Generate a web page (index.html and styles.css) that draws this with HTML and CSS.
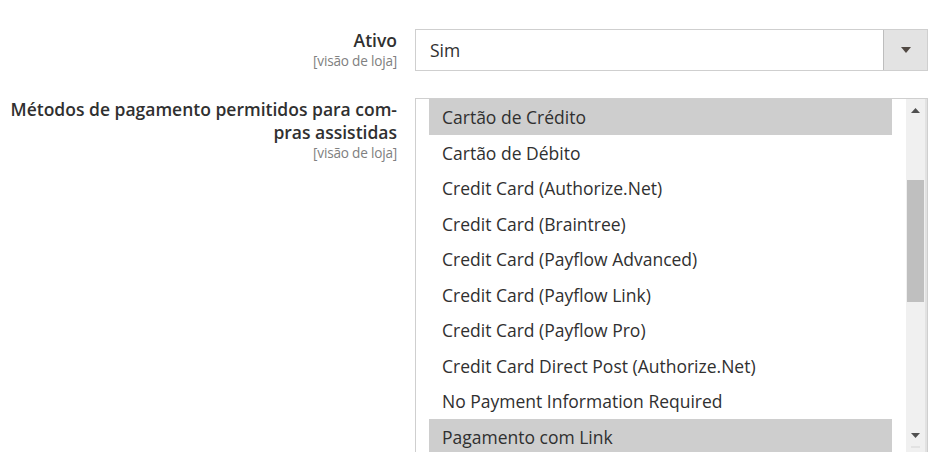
FILE: index.html
```html
<!DOCTYPE html>
<html lang="pt">
<head>
<meta charset="utf-8">
<title>Config</title>
<link rel="stylesheet" href="styles.css">
</head>
<body>
<div class="form">
  <div class="row row-first">
    <div class="label">
      <span class="label-text">Ativo</span>
      <span class="scope">[visão de loja]</span>
    </div>
    <div class="control">
      <div class="select">
        <span class="select-value">Sim</span>
        <span class="select-btn"><svg width="10" height="6" viewBox="0 0 10 6"><path d="M0 0h10L5 6z" fill="#514943"/></svg></span>
      </div>
    </div>
  </div>
  <div class="row">
    <div class="label">
      <span class="label-text">Métodos de pagamento permitidos para com-<br>pras assistidas</span>
      <span class="scope">[visão de loja]</span>
    </div>
    <div class="control">
      <div class="listbox">
        <ul class="options">
          <li class="opt selected">Cartão de Crédito</li>
          <li class="opt">Cartão de Débito</li>
          <li class="opt">Credit Card (Authorize.Net)</li>
          <li class="opt">Credit Card (Braintree)</li>
          <li class="opt">Credit Card (Payflow Advanced)</li>
          <li class="opt">Credit Card (Payflow Link)</li>
          <li class="opt">Credit Card (Payflow Pro)</li>
          <li class="opt">Credit Card Direct Post (Authorize.Net)</li>
          <li class="opt">No Payment Information Required</li>
          <li class="opt selected">Pagamento com Link</li>
        </ul>
        <div class="scrollbar">
          <span class="sb-arrow"><svg width="9" height="5" viewBox="0 0 9 5"><path d="M0 5h9L4.5 0z" fill="#505050"/></svg></span>
          <span class="sb-thumb"></span>
          <span class="sb-arrow sb-down"><svg width="9" height="5" viewBox="0 0 9 5"><path d="M0 0h9L4.5 5z" fill="#505050"/></svg></span>
        </div>
      </div>
    </div>
  </div>
</div>
</body>
</html>
```
FILE: styles.css
```css
html, body {
  margin: 0;
  padding: 0;
  background: #ffffff;
  height: 471px;
  overflow: hidden;
}
body {
  font-family: "Open Sans", "Liberation Sans", sans-serif;
  color: #303030;
}
.form {
  display: flex;
  flex-direction: column;
  gap: 27px;
  padding-top: 29px;
}
.row {
  display: grid;
  grid-template-columns: 397px 513px;
  column-gap: 18px;
  align-items: start;
}
.label {
  display: flex;
  flex-direction: column;
  align-items: flex-end;
  text-align: right;
}
.label-text {
  font-size: 17.5px;
  font-weight: 600;
  line-height: 23px;
  color: #303030;
}
.scope {
  margin-top: 1px;
  font-size: 13.6px;
  line-height: 15px;
  color: #808080;
  letter-spacing: -0.2px;
}
.select {
  display: flex;
  height: 42px;
  box-sizing: border-box;
  border: 1px solid #cfcfcf;
  background: #fff;
}
.select-value {
  flex: 1;
  padding-left: 14px;
  font-size: 17.5px;
  line-height: 40px;
  color: #303030;
}
.select-btn {
  width: 43px;
  background: #e3e3e3;
  border-left: 1px solid #bdbdbd;
  display: flex;
  align-items: center;
  justify-content: center;
}
.listbox {
  display: flex;
  height: 354px;
  box-sizing: border-box;
  border: 1px solid #cfcfcf;
  border-bottom: none;
  background: #fff;
  overflow: hidden;
}
.options {
  flex: 1;
  list-style: none;
  margin: 0;
  padding: 0 14px 0 13px;
}
.opt {
  height: 35.55px;
  box-sizing: border-box;
  padding-top: 2px;
  line-height: 33.55px;
  padding-left: 13px;
  font-size: 17.5px;
  color: #303030;
  white-space: nowrap;
}
.opt.selected {
  background: #cecece;
}
.scrollbar {
  width: 19px;
  background: #f0f0f0;
  border-right: 2px solid #e2e2e2;
  display: flex;
  flex-direction: column;
  align-items: center;
}
.sb-arrow {
  height: 22px;
  display: flex;
  align-items: center;
  justify-content: center;
}
.sb-thumb {
  width: 17px;
  height: 122px;
  margin-top: 59px;
  background: #bfbfbf;
}
.sb-down {
  margin-top: auto;
  margin-bottom: 4px;
  border-bottom: 2px solid #e2e2e2;
}
```
